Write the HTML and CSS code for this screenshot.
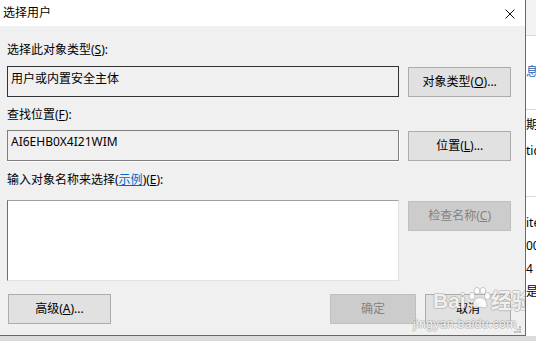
FILE: index.html
```html
<!DOCTYPE html>
<html>
<head>
    <title>选择用户</title>
    <link rel="stylesheet" href="styles.css">
</head>
<body>
    <div class="screen">
        <div class="top">
            <div class="dialog">
                <div class="titlebar">
                    <span class="title">选择用户</span>
                    <svg class="close" width="10" height="10" viewBox="0 0 10 10">
                        <path d="M0.5 0.5 L9.5 9.5 M9.5 0.5 L0.5 9.5" stroke="#111" stroke-width="1"/>
                    </svg>
                </div>

                <div class="content">
                    <div class="field-label first">选择此对象类型(<u>S</u>):</div>
                    <div class="row">
                        <div class="box readonly">用户或内置安全主体</div>
                        <button class="btn">对象类型(<u>O</u>)...</button>
                    </div>

                    <div class="field-label second">查找位置(<u>F</u>):</div>
                    <div class="row">
                        <div class="box sunken">AI6EHB0X4I21WIM</div>
                        <button class="btn">位置(<u>L</u>)...</button>
                    </div>

                    <div class="field-label third">输入对象名称来选择(<a class="link">示例</a>)(<u>E</u>):</div>
                    <div class="row">
                        <div class="box names"></div>
                        <button class="btn disabled">检查名称(<u>C</u>)</button>
                    </div>

                    <div class="actions">
                        <button class="btn advanced">高级(<u>A</u>)...</button>
                        <div class="action-group">
                            <button class="btn small disabled">确定</button>
                            <button class="btn small">取消</button>
                        </div>
                    </div>
                </div>

                <div class="watermark">
                    <div class="wm-logo">
                        <span>Bai</span>
                        <svg class="paw" width="24" height="22" viewBox="0 0 24 22">
                            <g fill="rgba(255,255,255,0.85)" stroke="rgba(140,140,140,0.55)" stroke-width="0.8">
                                <ellipse cx="5" cy="9" rx="3" ry="3.6"/>
                                <ellipse cx="10" cy="3.8" rx="2.8" ry="3.4"/>
                                <ellipse cx="16" cy="3.8" rx="2.8" ry="3.4"/>
                                <ellipse cx="20.5" cy="9" rx="3" ry="3.6"/>
                                <path d="M6 19 C6 13 10 10.5 13 10.5 C16 10.5 20 13 20 19 C20 21.5 16 21 13 20 C10 21 6 21.5 6 19 Z"/>
                            </g>
                        </svg>
                        <span>经验</span>
                    </div>
                    <span class="wm-url">jingyan.baidu.com</span>
                </div>

                <svg class="grip" width="7" height="7" viewBox="0 0 7 7">
                    <rect x="5" y="0" width="2" height="2" fill="#bdbdbd"/>
                    <rect x="2.5" y="2.5" width="2" height="2" fill="#bdbdbd"/>
                    <rect x="5" y="2.5" width="2" height="2" fill="#bdbdbd"/>
                    <rect x="0" y="5" width="2" height="2" fill="#bdbdbd"/>
                    <rect x="2.5" y="5" width="2" height="2" fill="#bdbdbd"/>
                    <rect x="5" y="5" width="2" height="2" fill="#bdbdbd"/>
                </svg>
            </div>

            <div class="behind">
                <div class="behind-head"></div>
                <div class="behind-text blue t1">息</div>
                <div class="behind-line l1"></div>
                <div class="behind-text t2">期</div>
                <div class="behind-text t3">tic</div>
                <div class="behind-line l2"></div>
                <div class="behind-text t4">ite</div>
                <div class="behind-text t5">00</div>
                <div class="behind-text t5">4 -</div>
                <div class="behind-text t5">是有</div>
            </div>
        </div>
        <div class="bottom-strip"></div>
    </div>
</body>
</html>
```

FILE: styles.css
```css
body {
    margin: 0;
    font-family: "Noto Sans", "Noto Sans CJK SC", sans-serif;
    font-size: 12px;
    color: #000;
    background: #e6e6e6;
    overflow: hidden;
}

.screen {
    width: 536px;
    height: 341px;
    overflow: hidden;
}

.top {
    display: flex;
}

.dialog {
    position: relative;
    width: 525px;
    height: 335px;
    background: #f0f0f0;
    border-right: 1px solid #1a7bd0;
    border-bottom: 1px solid #1a7bd0;
    display: flex;
    flex-direction: column;
    overflow: hidden;
}

.titlebar {
    height: 26px;
    flex-shrink: 0;
    background: #fff;
    display: flex;
    align-items: center;
    justify-content: space-between;
    padding: 0 10px 0 3px;
    line-height: 16px;
}

.close {
    margin-top: 1px;
}

.content {
    padding: 0 14px 0 7px;
}

.field-label {
    height: 16px;
    line-height: 16px;
    white-space: nowrap;
}

.field-label.first {
    margin-top: 16px;
    margin-bottom: 8px;
}

.field-label.second {
    margin-top: 10px;
    margin-bottom: 7px;
}

.field-label.third {
    margin-top: 11px;
    margin-bottom: 12px;
}

.link {
    color: #0066cc;
    text-decoration: underline;
}

.row {
    display: flex;
    gap: 8px;
    align-items: flex-start;
}

.box {
    width: 394px;
    height: 31px;
    box-sizing: border-box;
    line-height: 16px;
    padding: 4px 3px;
    white-space: nowrap;
}

.readonly {
    border: 1px solid #333;
}

.sunken {
    padding-top: 3px;
    border: 1px solid #7f7f7f;
    box-shadow: 0 1px 0 #fff, 1px 0 0 #fff;
}

.names {
    height: 81px;
    width: 393px;
    background: #fff;
    border-top: 1px solid #a0a0a0;
    border-left: 1px solid #6e6e6e;
    border-right: 1px solid #e3e3e3;
    border-bottom: 1px solid #e3e3e3;
}

.btn {
    margin: 1px 0 0 1px;
    width: 103px;
    height: 30px;
    box-sizing: border-box;
    background: #e1e1e1;
    border: 1px solid #adadad;
    font-family: inherit;
    font-size: 12px;
    line-height: 16px;
    color: #000;
    padding: 0;
}

.btn.disabled {
    background: #cccccc;
    border-color: #bfbfbf;
    color: #838383;
}

.actions {
    margin-top: 13px;
    display: flex;
    justify-content: space-between;
}

.actions .btn {
    margin-top: 0;
}

.btn.advanced {
    width: 103px;
}

.action-group {
    display: flex;
    gap: 9px;
}

.btn.small {
    width: 86px;
    margin-left: 0;
}

.grip {
    position: absolute;
    right: 4px;
    bottom: 2px;
}

.watermark {
    position: absolute;
    left: 433px;
    top: 289px;
    display: flex;
    flex-direction: column;
    pointer-events: none;
    color: rgba(255, 255, 255, 0.85);
    text-shadow: 1px 0 0 rgba(150, 150, 150, 0.45), -1px 0 0 rgba(150, 150, 150, 0.45),
        0 1px 0 rgba(150, 150, 150, 0.45), 0 -1px 0 rgba(150, 150, 150, 0.45);
    white-space: nowrap;
}

.wm-logo {
    display: flex;
    align-items: center;
    font-family: "Liberation Sans", "Noto Sans CJK SC", sans-serif;
    font-size: 21px;
    font-weight: bold;
    line-height: 24px;
}

.paw {
    margin: -6px 0 0 1px;
}

.wm-url {
    margin: 4px 0 0 -20px;
    font-family: "Liberation Sans", sans-serif;
    font-size: 12px;
    line-height: 14px;
    letter-spacing: 0.4px;
}

.behind {
    width: 10px;
    background: #fff;
    display: flex;
    flex-direction: column;
    overflow: hidden;
    white-space: nowrap;
    font-size: 12px;
    line-height: 16px;
}

.behind-head {
    height: 35px;
    background: #f3f3f3;
    border-bottom: 1px solid #d8d8d8;
    flex-shrink: 0;
}

.behind-text {
    height: 16px;
    flex-shrink: 0;
}

.blue {
    color: #1a5fb4;
}

.t1 {
    margin-top: 28px;
}

.behind-line {
    height: 1px;
    background: #d8d8d8;
    flex-shrink: 0;
}

.l1 {
    margin-top: 29px;
}

.t2 {
    margin-top: 7px;
}

.t3 {
    margin-top: 10px;
}

.l2 {
    margin-top: 37px;
}

.t4 {
    margin-top: 18px;
}

.t5 {
    margin-top: 7px;
}

.bottom-strip {
    height: 5px;
    background: #dcdcdc;
}
```
